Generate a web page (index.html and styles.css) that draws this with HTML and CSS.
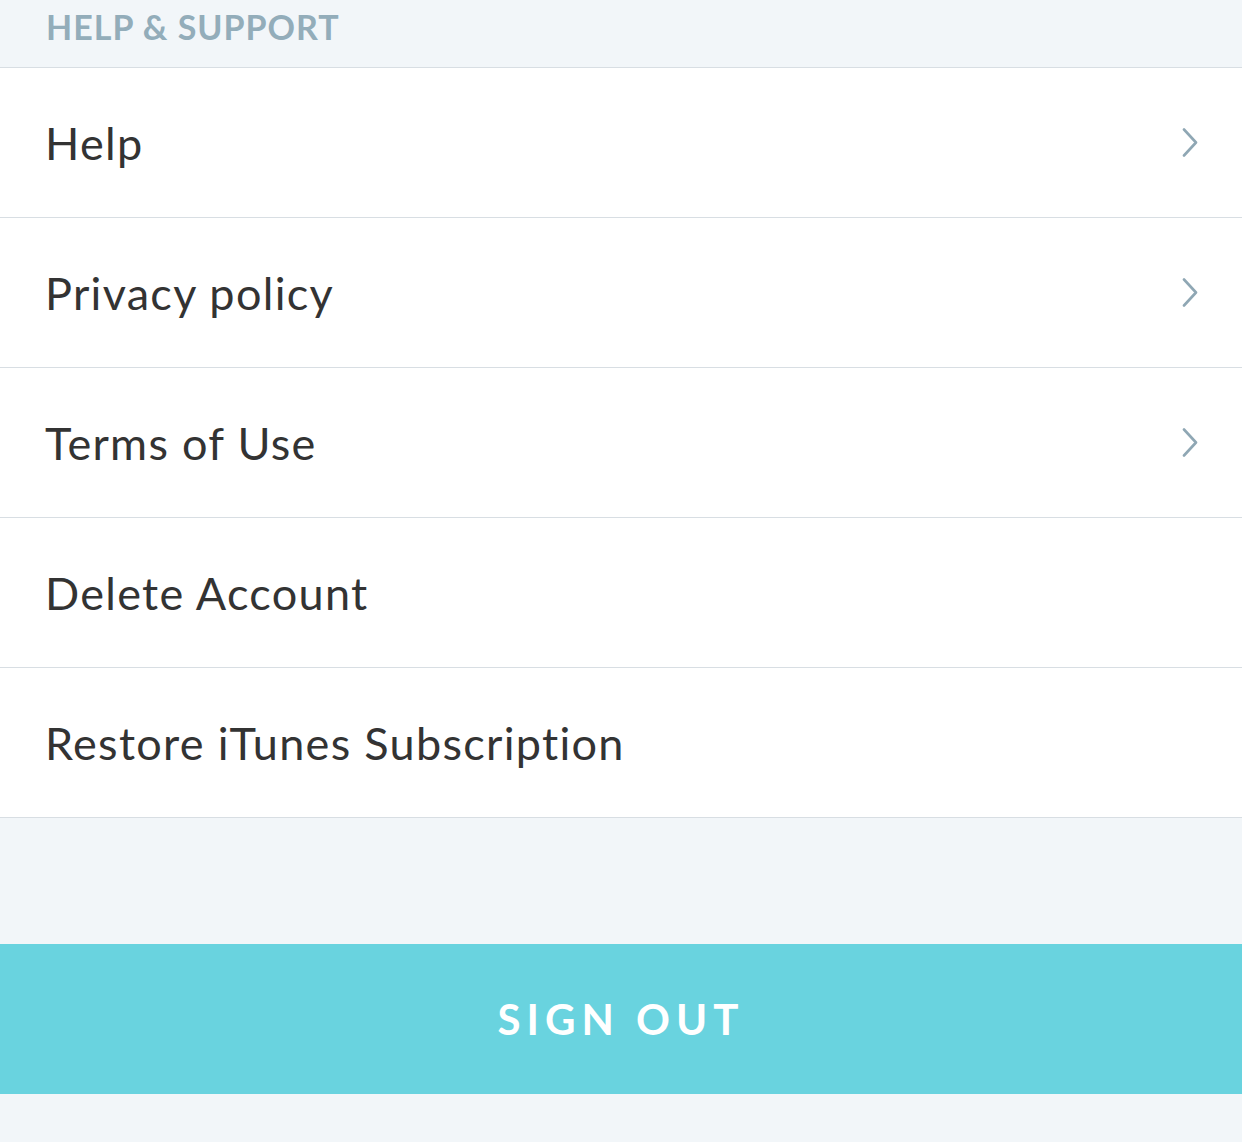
FILE: index.html
```html
<!DOCTYPE html>
<html>
<head>
<meta charset="utf-8">
<link rel="stylesheet" href="styles.css">
</head>
<body>
<div class="page">
  <div class="section-header">HELP &amp; SUPPORT</div>
  <ul class="list">
    <li class="row"><span class="label">Help</span><svg class="chev" width="16" height="30" viewBox="0 0 16 30"><path d="M2 1.5 L14 14.5 L2 27.5" fill="none" stroke="#8fa7b4" stroke-width="2.6" stroke-linecap="round" stroke-linejoin="round"/></svg></li>
    <li class="row"><span class="label">Privacy policy</span><svg class="chev" width="16" height="30" viewBox="0 0 16 30"><path d="M2 1.5 L14 14.5 L2 27.5" fill="none" stroke="#8fa7b4" stroke-width="2.6" stroke-linecap="round" stroke-linejoin="round"/></svg></li>
    <li class="row"><span class="label">Terms of Use</span><svg class="chev" width="16" height="30" viewBox="0 0 16 30"><path d="M2 1.5 L14 14.5 L2 27.5" fill="none" stroke="#8fa7b4" stroke-width="2.6" stroke-linecap="round" stroke-linejoin="round"/></svg></li>
    <li class="row"><span class="label">Delete Account</span></li>
    <li class="row"><span class="label">Restore iTunes Subscription</span></li>
  </ul>
  <div class="spacer"></div>
  <button class="signout">SIGN OUT</button>
</div>
</body>
</html>
```
FILE: styles.css
```css
html, body {
  margin: 0;
  padding: 0;
  background: #f2f6f9;
}
.page {
  font-family: "Lato", "Open Sans", sans-serif;
  width: 1242px;
  height: 1142px;
  background: #f2f6f9;
  display: flex;
  flex-direction: column;
}
.section-header {
  height: 68px;
  box-sizing: border-box;
  padding: 7px 0 0 46px;
  font-size: 34px;
  font-weight: 700;
  letter-spacing: 1px;
  color: #93adba;
  border-bottom: 1px solid #d8dee3;
  line-height: 40px;
}
.list {
  list-style: none;
  margin: 0;
  padding: 0;
  background: #fff;
}
.row {
  height: 149px;
  border-bottom: 1px solid #d8dee3;
  display: flex;
  align-items: center;
  justify-content: space-between;
  padding: 0 44px 0 45px;
}
.label {
  font-size: 45px;
  color: #333333;
  letter-spacing: 1.3px;
}
.chev {
  display: block;
}
.spacer {
  height: 126px;
}
.signout {
  height: 150px;
  border: 0;
  margin: 0;
  padding: 0;
  background: #69d3df;
  color: #fff;
  font-family: "Lato", "Open Sans", sans-serif;
  font-size: 42px;
  font-weight: 700;
  letter-spacing: 6px;
  width: 100%;
}
```
